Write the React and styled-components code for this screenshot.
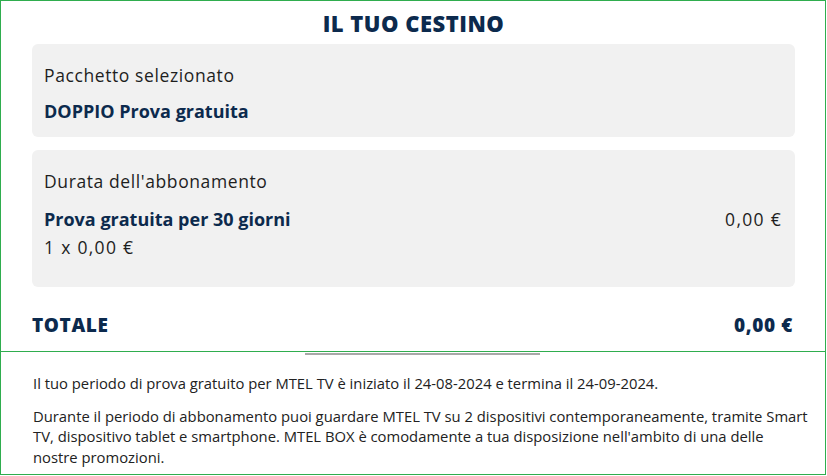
import React from 'react';
import styled, { createGlobalStyle } from 'styled-components';

const GlobalStyle = createGlobalStyle`
	body {
		margin: 0;
		background: #ffffff;
	}
`;

const Frame = styled.div`
	width: 826px;
	height: 475px;
	box-sizing: border-box;
	border: 1px solid #2fad4e;
	display: flex;
	flex-direction: column;
	background: #fff;
	overflow: hidden;
`;

const Basket = styled.section`
	flex: 0 0 351px;
	box-sizing: border-box;
	border-bottom: 1px solid #2fad4e;
	padding: 0 30px 0 31px;
	display: flex;
	flex-direction: column;
	font-family: 'Open Sans', 'Noto Sans', sans-serif;
	color: #0c2a4d;
`;

const Title = styled.h1`
	margin: 0;
	flex: 0 0 43px;
	display: flex;
	align-items: center;
	justify-content: center;
	font-size: 22px;
	font-weight: 800;
	letter-spacing: 0.5px;
	color: #0c2a4d;
`;

const Card = styled.div`
	background: #f1f1f1;
	border-radius: 6px;
	flex: 0 0 ${(p) => p.$h}px;
	box-sizing: border-box;
	padding: 18px 13px 0 12px;
	margin-bottom: 13px;
	display: flex;
	flex-direction: column;
`;

const Label = styled.div`
	font-size: 17.5px;
	line-height: 26px;
	color: #1e1e1e;
	font-weight: 400;
	letter-spacing: 0.6px;
	margin-bottom: ${(p) => p.$mb || 0}px;
`;

const Row = styled.div`
	display: flex;
	justify-content: space-between;
	align-items: baseline;
`;

const Strong = styled.div`
	font-size: 18px;
	line-height: 27px;
	font-weight: 700;
	color: #0c2a4d;
`;

const Price = styled.div`
	font-size: 17.5px;
	line-height: 27px;
	font-weight: 400;
	letter-spacing: 1.3px;
	color: #1e1e1e;
	margin-top: ${(p) => p.$mt || 0}px;
`;

const Total = styled.div`
	display: flex;
	justify-content: space-between;
	align-items: center;
	margin-top: 12px;
	padding-right: 2px;
	font-size: 19px;
	font-weight: 800;
	letter-spacing: 0.6px;
	color: #0c2a4d;
`;

const Info = styled.section`
	position: relative;
	flex: 1 1 auto;
	min-height: 0;
	padding: 21px 14px 0 32px;
	font-family: 'Open Sans', 'Noto Sans', sans-serif;
	font-size: 14.8px;
	line-height: 20.7px;
	color: #222;
`;

const Thumb = styled.div`
	position: absolute;
	top: 1px;
	left: 304px;
	width: 235px;
	height: 2px;
	background: #a8a8a8;
`;

const P = styled.p`
	margin: 0 0 12px;
`;

const App = () => {
	return (
		<Frame>
			<GlobalStyle />
			<Basket>
				<Title>IL TUO CESTINO</Title>
				<Card $h={93}>
					<Label $mb={10}>Pacchetto selezionato</Label>
					<Strong>DOPPIO Prova gratuita</Strong>
				</Card>
				<Card $h={137}>
					<Label $mb={12}>Durata dell'abbonamento</Label>
					<Row>
						<Strong>Prova gratuita per 30 giorni</Strong>
						<Price>0,00 €</Price>
					</Row>
					<Price $mt={1}>1 x 0,00 €</Price>
				</Card>
				<Total>
					<span>TOTALE</span>
					<span>0,00 €</span>
				</Total>
			</Basket>
			<Info>
				<Thumb />
				<P>Il tuo periodo di prova gratuito per MTEL TV è iniziato il 24-08-2024 e termina il 24-09-2024.</P>
				<P>
					Durante il periodo di abbonamento puoi guardare MTEL TV su 2 dispositivi contemporaneamente, tramite Smart
					TV, dispositivo tablet e smartphone. MTEL BOX è comodamente a tua disposizione nell'ambito di una delle
					nostre promozioni.
				</P>
			</Info>
		</Frame>
	);
};

export default App;
